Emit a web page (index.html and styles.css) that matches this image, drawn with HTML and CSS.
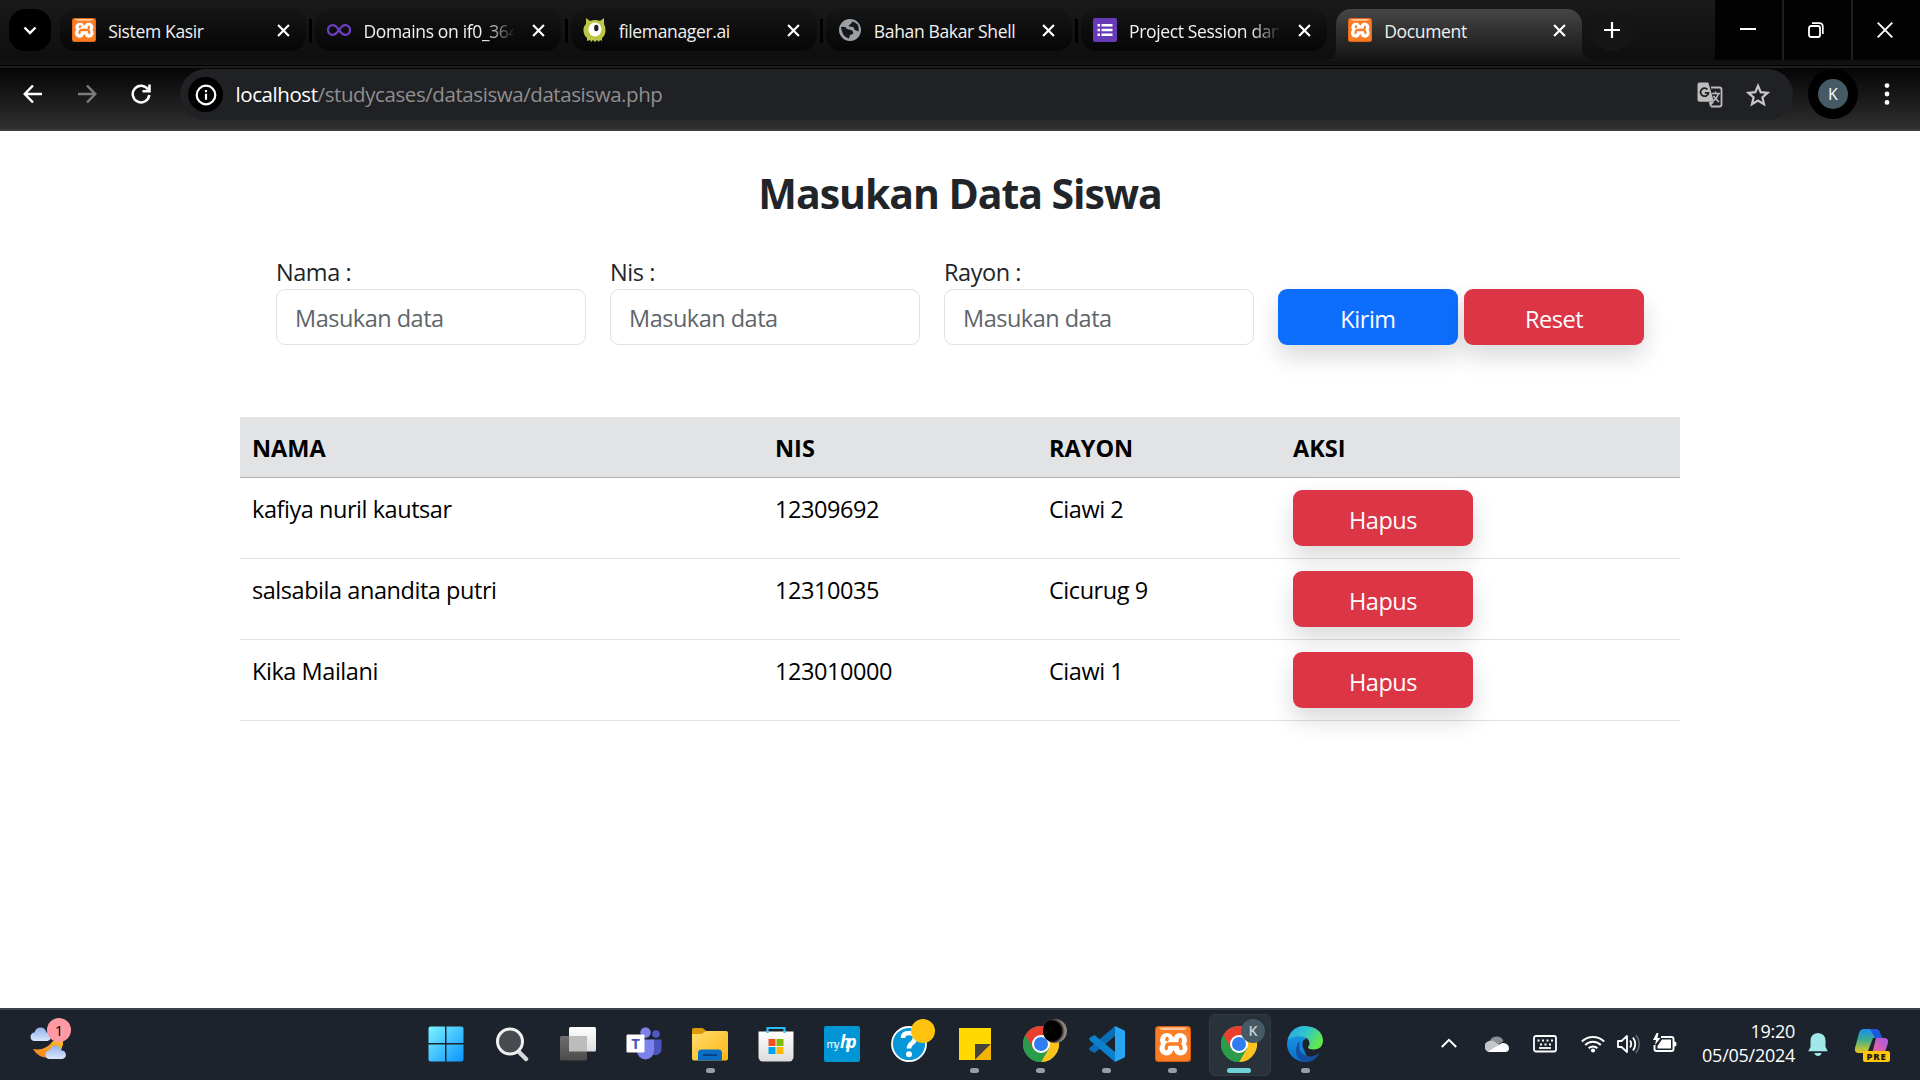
FILE: index.html
```html
<!DOCTYPE html>
<html lang="id">
<head>
<meta charset="utf-8">
<title>Document</title>
<link rel="stylesheet" href="styles.css">
</head>
<body>
<svg class="defs" width="0" height="0" aria-hidden="true">
  <defs>
    <linearGradient id="gWin" x1="0" y1="0" x2="1" y2="1"><stop offset="0" stop-color="#7df3ff"/><stop offset="1" stop-color="#0a93ff"/></linearGradient>
    <linearGradient id="gFold" x1="0" y1="0" x2="1" y2="1"><stop offset="0" stop-color="#ffdc6e"/><stop offset="1" stop-color="#fdb813"/></linearGradient>
    <linearGradient id="gCloud" x1="0" y1="0" x2="0" y2="1"><stop offset="0" stop-color="#8fb0ea"/><stop offset="1" stop-color="#dbe7fb"/></linearGradient>
    <linearGradient id="gMoon" x1="1" y1="0" x2="0" y2="1"><stop offset="0" stop-color="#fbc02d"/><stop offset="1" stop-color="#f57c1a"/></linearGradient>
    <linearGradient id="gGrey" x1="0" y1="0" x2="0" y2="1"><stop offset="0" stop-color="#6e6e6e"/><stop offset="1" stop-color="#4c4c4c"/></linearGradient>
    <linearGradient id="gWhite" x1="0" y1="0" x2="0" y2="1"><stop offset="0" stop-color="#fff"/><stop offset="1" stop-color="#dcdcdc"/></linearGradient>
    <linearGradient id="gEdge1" x1="0" y1="0" x2="1" y2=".5"><stop offset="0" stop-color="#2aa4e0"/><stop offset=".5" stop-color="#30c5cf"/><stop offset="1" stop-color="#62e84b"/></linearGradient>
    <linearGradient id="gEdge2" x1="0" y1="0" x2="0" y2="1"><stop offset="0" stop-color="#1ea0e4"/><stop offset="1" stop-color="#0b6fd0"/></linearGradient>
    <linearGradient id="gCopA" x1="0" y1="0" x2="0" y2="1"><stop offset="0" stop-color="#1b8df0"/><stop offset=".45" stop-color="#3fae8e"/><stop offset="1" stop-color="#ecc817"/></linearGradient>
    <linearGradient id="gCopB" x1="1" y1="0" x2="0" y2="1"><stop offset="0" stop-color="#a557ee"/><stop offset="1" stop-color="#ff6a7c"/></linearGradient>
    <symbol id="xampp" viewBox="0 0 36 36">
      <rect width="36" height="36" rx="3.5" fill="#d85f10"/>
      <rect x="1" y="1" width="34" height="34" rx="3" fill="#fb7d26"/>
      <path d="M4 1.5h28q-1 2.5-5 2.5H9Q5 4 4 1.5z" fill="#ffc79c"/>
      <g fill="#fff"><circle cx="12" cy="14" r="7"/><circle cx="25" cy="14" r="7"/><circle cx="11.5" cy="22.500" r="7"/><circle cx="25.500" cy="22.500" r="7"/><path d="M12 12h13v12H12z"/></g>
      <path d="M18.500 6v4M18.500 26v4" stroke="#fb7d26" stroke-width="2.500"/>
      <path d="M11.300 22.500c0-4 1-4.500 4-4.500h6c4 0 4-1.500 4-4.500M23 18c2.500.5 3 2 3 4.500M12 12.500v1.200" fill="none" stroke="#fb7d26" stroke-width="3.400" stroke-linecap="round"/>
    </symbol>
    <symbol id="chrome" viewBox="0 0 36 36">
      <circle cx="18" cy="18" r="18" fill="#2fa14f"/>
      <path d="M18 18 2.400 9A18 18 0 0 1 33.600 9z" fill="#e8402f"/>
      <path d="M18 9h15.600A18 18 0 0 1 18 36l7.800-13.500z" fill="#fcc31e"/>
      <path d="M2.400 9A18 18 0 0 0 18 36l7.800-13.500L18 18l-7.800 4.500z" fill="#2b9c4a"/>
      <path d="M2.400 9 10.200 22.500 18 18V9z" fill="#e8402f"/>
      <circle cx="18" cy="18" r="9" fill="#fff"/><circle cx="18" cy="18" r="7" fill="#2f7df0"/>
    </symbol>
    <symbol id="x" viewBox="0 0 12 12"><path d="M1 1l10 10M11 1 1 11" stroke="#fff" stroke-width="2" fill="none"/></symbol>
  </defs>
</svg>

<header class="browser">
  <div class="tabstrip">
    <div class="tab-search"><svg width="14" height="9" viewBox="0 0 14 9"><path d="M1.500 1.500 7 7l5.500-5.500" fill="none" stroke="#fff" stroke-width="2.400"/></svg></div>
    <div class="tabs">
      <div class="tab"><svg class="fav"><use href="#xampp"/></svg><span class="name">Sistem Kasir</span><svg class="close"><use href="#x"/></svg></div>
      <div class="tab"><svg class="fav" viewBox="0 0 24 24"><path d="M12 12c-2.500-3.500-4-4.800-6.200-4.800a4.800 4.800 0 0 0 0 9.600c2.200 0 3.700-1.300 6.200-4.800s4-4.800 6.200-4.800a4.800 4.800 0 0 1 0 9.600c-2.200 0-3.700-1.300-6.200-4.800z" fill="none" stroke="#6b3fc0" stroke-width="2.300"/></svg><span class="name faded">Domains on if0_364</span><svg class="close"><use href="#x"/></svg></div>
      <div class="tab"><svg class="fav" viewBox="0 0 24 24"><path d="M3 0l4 3q5-2 10 0l4-3v6q2 3 1.500 7-.5 5-3.500 7v3l-2-1-1 2-2-2-2 2-2-2-2 2-1-2-3 1v-3q-3-2-3.500-7Q0 9 3 6z" fill="#bcc544"/><ellipse cx="12" cy="11.500" rx="6.500" ry="7" fill="#fff"/><ellipse cx="13.300" cy="10" rx="2.200" ry="3.300" fill="#222"/></svg><span class="name">filemanager.ai</span><svg class="close"><use href="#x"/></svg></div>
      <div class="tab"><svg class="fav" viewBox="0 0 24 24"><circle cx="12" cy="12" r="11" fill="#9aa0a6"/><path d="M3 9q5-1 6 2l4 1q3 1 2 4l-3 1-1 3.500Q4 19 3 9zM14 3.500q0 2-2 3t-1 2l4 .5q2 1 1 2.500l4.500 2Q22 5 14 3.500z" fill="#17181a"/></svg><span class="name">Bahan Bakar Shell</span><svg class="close"><use href="#x"/></svg></div>
      <div class="tab"><svg class="fav" viewBox="0 0 24 24"><rect width="24" height="24" rx="2" fill="#673ab7"/><path d="M4.500 6h2.500v2.500H4.500zM4.500 10.800h2.500v2.500H4.500zM4.500 15.500h2.500V18H4.500zM8.500 6h11v2.500h-11zM8.500 10.800h11v2.500h-11zM8.500 15.500h11V18h-11z" fill="#fff"/></svg><span class="name faded">Project Session dan</span><svg class="close"><use href="#x"/></svg></div>
      <div class="tab active"><svg class="fav"><use href="#xampp"/></svg><span class="name">Document</span><svg class="close"><use href="#x"/></svg></div>
    </div>
    <div class="new-tab"><svg width="16" height="16" viewBox="0 0 16 16"><path d="M8 0v16M0 8h16" stroke="#fff" stroke-width="2.200"/></svg></div>
    <div class="win-controls">
      <div class="win-btn"><svg width="16" height="16" viewBox="0 0 16 16"><path d="M0 7h16" stroke="#fff" stroke-width="2"/></svg></div>
      <div class="win-btn"><svg width="16" height="16" viewBox="0 0 16 16"><rect x="1" y="4" width="11" height="11" rx="2" fill="none" stroke="#fff" stroke-width="1.800"/><path d="M4 1.200h7.500q3.300 0 3.300 3.300V12" fill="none" stroke="#fff" stroke-width="1.700"/></svg></div>
      <div class="win-btn"><svg width="16" height="16" viewBox="0 0 16 16"><path d="M.7.7l14.600 14.600M15.300.7.7 15.300" stroke="#fff" stroke-width="1.900"/></svg></div>
    </div>
  </div>

  <div class="toolbar">
    <div class="nav">
      <svg width="20" height="20" viewBox="0 0 20 20"><path d="M19 10H2M10 1.500 1.800 10 10 18.500" fill="none" stroke="#fff" stroke-width="2.500"/></svg>
      <svg width="20" height="20" viewBox="0 0 20 20"><path d="M1 10h17M10 1.500l8.200 8.500-8.200 8.500" fill="none" stroke="#7b7b7b" stroke-width="2.500"/></svg>
      <svg width="20" height="20" viewBox="0 0 20 20"><path d="M17 5.500A8.300 8.300 0 1 0 18.300 11M18.500.5v6.700h-7" fill="none" stroke="#fff" stroke-width="2.500"/></svg>
    </div>
    <div class="omnibox">
      <div class="site-info"><svg width="22" height="22" viewBox="0 0 22 22"><circle cx="11" cy="11" r="9.300" fill="none" stroke="#fff" stroke-width="2.200"/><path d="M11 9.800v6M11 6v2.200" stroke="#fff" stroke-width="2.200"/></svg></div>
      <div class="url"><b>localhost</b>/studycases/datasiswa/datasiswa.php</div>
      <svg class="translate" width="26" height="26" viewBox="0 0 26 26"><path d="M14 5.500h8.500a2 2 0 0 1 2 2v15a2 2 0 0 1-2 2H14" fill="none" stroke="#bdbdbd" stroke-width="1.800"/><path d="M2.500.5h8.800l5.700 19.300H2.500a2 2 0 0 1-2-2V2.500a2 2 0 0 1 2-2z" fill="#bdbdbd"/><path d="M12 20h5l-4 5z" fill="#bdbdbd"/><path d="M10.500 7.500a4 4 0 1 0 1 3.300H7.800" fill="none" stroke="#202124" stroke-width="1.800"/><path d="M14.500 11.500H23M18.500 9.500v2M21.500 11.500q-1 4-5 7.500M16.500 14q2 3 5.500 6" fill="none" stroke="#bdbdbd" stroke-width="1.500"/></svg>
      <svg width="26" height="26" viewBox="0 0 26 26"><path d="M13 3.800l2.700 6.400 6.900.6-5.200 4.500 1.600 6.800-6-3.600-6 3.600 1.600-6.800-5.200-4.500 6.900-.6z" fill="none" stroke="#c7c7c7" stroke-width="2.200"/></svg>
    </div>
    <div class="profile"><span>K</span></div>
    <svg class="menu" width="6" height="22" viewBox="0 0 6 22"><g fill="#fff"><circle cx="3" cy="2.600" r="2.400"/><circle cx="3" cy="11" r="2.400"/><circle cx="3" cy="19.400" r="2.400"/></g></svg>
  </div>
</header>

<main class="page">
  <h1>Masukan Data Siswa</h1>
  <form class="entry" onsubmit="return false">
    <label class="field">Nama :<input type="text" placeholder="Masukan data"></label>
    <label class="field">Nis :<input type="text" placeholder="Masukan data"></label>
    <label class="field">Rayon :<input type="text" placeholder="Masukan data"></label>
    <div class="actions">
      <button class="btn primary">Kirim</button>
      <button class="btn danger">Reset</button>
    </div>
  </form>
  <table class="students">
    <colgroup><col class="c-nama"><col class="c-nis"><col class="c-rayon"><col></colgroup>
    <thead><tr><th>NAMA</th><th>NIS</th><th>RAYON</th><th>AKSI</th></tr></thead>
    <tbody>
      <tr><td>kafiya nuril kautsar</td><td>12309692</td><td>Ciawi 2</td><td class="act"><button class="btn danger">Hapus</button></td></tr>
      <tr><td>salsabila anandita putri</td><td>12310035</td><td>Cicurug 9</td><td class="act"><button class="btn danger">Hapus</button></td></tr>
      <tr><td>Kika Mailani</td><td>123010000</td><td>Ciawi 1</td><td class="act"><button class="btn danger">Hapus</button></td></tr>
    </tbody>
  </table>
</main>

<footer class="taskbar">
  <div class="weather">
    <svg width="42" height="46" viewBox="0 0 42 46"><path d="M33 20.500v5a16 16 0 0 1-30 4.500q12 2.500 20-8z" fill="url(#gMoon)"/><path d="M4 22a4.300 4.300 0 0 1 .5-8.500Q6 8.500 10.500 8.500t6 5a4.300 4.300 0 0 1 1 8.500z" fill="url(#gCloud)"/><path d="M19 40a4.300 4.300 0 0 1 .5-8.500q1.500-5 6-5t6 5a4.300 4.300 0 0 1 1 8.500z" fill="url(#gCloud)"/></svg>
    <span class="count">1</span>
  </div>
  <div class="apps">
    <div class="app"><svg viewBox="0 0 36 36"><path d="M2.500.5H17V17H.5V2.500a2 2 0 0 1 2-2zM18.500.5h15a2 2 0 0 1 2 2V17h-17zM.5 18.500H17v17H2.500a2 2 0 0 1-2-2zM18.500 18.500h17v15a2 2 0 0 1-2 2h-15z" fill="url(#gWin)"/></svg></div>
    <div class="app"><svg viewBox="0 0 36 36"><path d="M25 26l7 7" stroke="#d5d7d9" stroke-width="4.500" stroke-linecap="round"/><circle cx="16" cy="15.500" r="12.500" fill="#474b50" stroke="#f0f0f0" stroke-width="3"/></svg></div>
    <div class="app"><svg viewBox="0 0 36 36"><rect x="9" y="1" width="27" height="24.500" rx="1.500" fill="url(#gWhite)"/><rect x="0" y="10" width="27" height="24.500" rx="1.500" fill="url(#gGrey)"/><path d="M9 10h18v15.500H9z" fill="#bcbcbc"/></svg></div>
    <div class="app"><svg viewBox="0 0 36 36"><circle cx="30" cy="8" r="3.800" fill="#5059c9"/><path d="M26 13.500h9.500V24a6 6 0 0 1-9.500 4z" fill="#4b53bc"/><circle cx="19.500" cy="6.500" r="5.200" fill="#7b83eb"/><path d="M11 13.500h17V25a8.500 8.500 0 0 1-17 0z" fill="#7b83eb"/><rect x=".5" y="8.500" width="18" height="18" rx="1.300" fill="#fff"/><text x="9.500" y="23" class="t-teams">T</text></svg></div>
    <div class="app running"><svg viewBox="0 0 36 36"><path d="M0 4a2 2 0 0 1 2-2h8.500l4 3-3.500 4H0z" fill="#dc9a09"/><path d="M0 8h9.500l5-3H34a2 2 0 0 1 2 2v25.500a2 2 0 0 1-2 2H2a2 2 0 0 1-2-2z" fill="url(#gFold)"/><path d="M6 34.500V27a3.500 3.500 0 0 1 3.500-3.500h17A3.500 3.500 0 0 1 30 27v7.500z" fill="#0a6fc4"/><path d="M11 29h14" stroke="#073f7d" stroke-width="1.800"/></svg></div>
    <div class="app"><svg viewBox="0 0 36 36"><path d="M9.500 8V2h17v6" fill="none" stroke="#28bdf2" stroke-width="2.200"/><path d="M.5 5.500h35V31a4.500 4.500 0 0 1-4.500 4.500H5A4.500 4.500 0 0 1 .5 31z" fill="url(#gWhite)"/><path d="M9.500 7V5.500M26.500 7V5.500" stroke="#28bdf2" stroke-width="2.200"/><path d="M10.500 13h7v7h-7z" fill="#f25022"/><path d="M18.500 13h7v7h-7z" fill="#7fba00"/><path d="M10.500 21h7v7h-7z" fill="#00a4ef"/><path d="M18.500 21h7v7h-7z" fill="#ffb900"/></svg></div>
    <div class="app"><svg viewBox="0 0 36 36"><rect width="36" height="36" rx="2" fill="#0096d6"/><text x="2.500" y="21.500" class="t-my" textLength="13">my</text><text x="16" y="22" class="t-hp" textLength="16.500">hp</text></svg></div>
    <div class="app"><svg viewBox="0 0 36 36"><circle cx="18" cy="18" r="17" fill="#0796d8" stroke="#fff" stroke-width="1.800"/><path d="M12 12q0-5 6-5t6 5q0 3-3.500 5.500-2.500 2-2.500 5" fill="none" stroke="#fff" stroke-width="4.600"/><circle cx="18" cy="28.200" r="3" fill="#fff"/></svg><i class="badge yellow"></i></div>
    <div class="app running"><svg viewBox="0 0 36 36"><path d="M2 2h32v32H2z" fill="#ffd900"/><path d="M18 18h16L18 34z" fill="#45423f"/><path d="M34 18v16H18z" fill="#f5b400"/></svg></div>
    <div class="app running"><svg><use href="#chrome"/></svg><i class="badge moon"></i></div>
    <div class="app running"><svg viewBox="0 0 36 36"><path d="M26 0v10L5.500 27 1 24.500q-1.500-1.500 0-3z" fill="#0a6cb5"/><path d="M26 36V26L5.500 9 1 11.500q-1.500 1.500 0 3z" fill="#0b80cc"/><path d="M26 0l9 4.300q1 .5 1 1.700v24q0 1.200-1 1.700L26 36z" fill="#27a5f3"/></svg></div>
    <div class="app running"><svg><use href="#xampp"/></svg></div>
    <div class="app running current"><svg><use href="#chrome"/></svg><i class="badge kay">K</i></div>
    <div class="app running"><svg viewBox="0 0 36 36"><path d="M18 0a18 18 0 0 0-18 18 18 18 0 0 0 22 17.500l-6-14Q14 14 19 13z" fill="url(#gEdge2)"/><path d="M13 15q-3.500 12 7 15 6 1.500 12.500-3Q28 36 19 36 7 34 9.500 21q1-4 3.500-6z" fill="#12509f"/><path d="M1 14Q4 0 18 0q17 1 18 14.500 0 8.500-9 9-6 0-6-2.500 2-2 1.500-4.500-1-5-7.500-6Q6 9.500 1 14z" fill="url(#gEdge1)"/></svg></div>
  </div>
  <div class="tray">
    <svg class="up" width="16" height="10" viewBox="0 0 16 10"><path d="M.8 9 8 1.800 15.200 9" fill="none" stroke="#fff" stroke-width="2"/></svg>
    <svg class="cloud" width="24" height="18" viewBox="0 0 24 18"><path d="M5.500 15A5 5 0 0 1 5 5.500 7.500 7.500 0 0 1 18.500 6z" fill="#8b8f94"/><path d="M5 17A5.500 5.500 0 0 1 5 6q4-1 6.500 2L20 14z" fill="#c3c5c8"/><path d="M3 16.500 17 8q6.500 0 7 5 0 4-4 4H5z" fill="#fff"/></svg>
    <svg class="kbd" width="24" height="18" viewBox="0 0 24 18"><rect x="1" y="1" width="22" height="15.500" rx="2" fill="none" stroke="#fff" stroke-width="1.800"/><path d="M4.500 5.500h16" stroke="#fff" stroke-width="2" stroke-dasharray="2 2.500"/><path d="M7 9.500h12" stroke="#fff" stroke-width="2" stroke-dasharray="2 2.500"/><path d="M6 13h12" stroke="#fff" stroke-width="1.800"/></svg>
    <svg class="wifi" width="24" height="18" viewBox="0 0 24 18"><g fill="none" stroke="#fff" stroke-width="1.900"><path d="M.8 6.500a16 16 0 0 1 22.400 0M4.200 10a11 11 0 0 1 15.600 0M7.600 13.300a6.300 6.300 0 0 1 8.800 0"/></g><circle cx="12" cy="15.500" r="2.100" fill="#fff"/></svg>
    <svg class="vol" width="24" height="20" viewBox="0 0 24 20"><g fill="none" stroke="#fff" stroke-width="1.800"><path d="M1 7h3.500L10 2v16l-5.500-5H1z" stroke-linejoin="round"/><path d="M13 6.500q2.500 3.500 0 7M16 3.500q4.500 6.500 0 13"/><path d="M19 1q6.500 9 0 18" stroke="#5d6267"/></g></svg>
    <svg class="bat" width="26" height="22" viewBox="0 0 26 22"><path d="M9 5h10.500a2 2 0 0 1 2 2v10a2 2 0 0 1-2 2h-15a2 2 0 0 1-2-2v-4" fill="none" stroke="#fff" stroke-width="1.900"/><path d="M10 7.500h9v9H5.500V14z" fill="#fff"/><path d="M22 9.500h1q1.500 0 1.500 2.500T23 14.500h-1z" fill="#fff"/><path d="M4.500 1 1 8h3l-1 5 5.500-7H5.500L6.500 1z" fill="#fff"/></svg>
    <div class="clock"><span>19:20</span><span>05/05/2024</span></div>
    <svg class="bell" width="20" height="24" viewBox="0 0 20 24"><path d="M10 0q7.500.5 7.500 8v6l2.300 4.200H.2L2.500 14V8Q2.500.5 10 0zM6.300 20h7.400q-1 3-3.700 3t-3.700-3z" fill="#9fe9ea"/></svg>
    <div class="copilot">
      <svg width="36" height="36" viewBox="0 0 36 36"><path d="M10 1h11q4 0 5 4l2 5h-9L14 23q-1 2-3 2H5q-5 0-4-5L5 5q1-4 5-4z" fill="url(#gCopA)"/><path d="M16 1h5q4 0 5 4l2 5h-7z" fill="#1c57dd"/><path d="M22 10h8q5 0 4 5l-3 9q-1 3-4 3H15q3-1 4-5z" fill="url(#gCopB)"/></svg>
      <span class="pre">PRE</span>
    </div>
  </div>
</footer>
</body>
</html>
```
FILE: styles.css
```css
* { box-sizing: border-box; }
body {
  margin: 0;
  width: 1920px;
  height: 1080px;
  overflow: hidden;
  display: flex;
  flex-direction: column;
  background: #fff;
  font-family: "Open Sans", "Noto Sans", sans-serif;
}
svg { display: block; flex: none; }
.defs { position: absolute; }

/* browser chrome */
.browser { height: 131px; flex: none; background: #0c0c0c; }
.tabstrip {
  height: 68px;
  display: flex;
  align-items: flex-start;
  padding-left: 9px;
  background: linear-gradient(#1a1a1a, #0e0e0e 60px, #141414 65px, #000 65px, #000 66px, #1e1e1e 66px);
}
.tab-search {
  width: 42px; height: 42px; margin-top: 9px;
  border-radius: 16px; background: #000;
  display: grid; place-items: center;
}
.tabs { display: flex; margin-left: 9.3px; gap: 9.2px; }
.tab {
  width: 246px; height: 42px; margin-top: 9px;
  padding: 0 16.5px 0 12px;
  border-radius: 15px;
  display: flex; align-items: center;
  background: linear-gradient(#151515, #060606);
  position: relative;
}
.tab + .tab:not(.active)::before {
  content: ""; position: absolute; left: -6px; top: 10px;
  width: 3px; height: 24px; background: #000;
}
.tab.active {
  height: 52px; padding-bottom: 10px;
  border-radius: 15px 15px 0 0;
  background: linear-gradient(#464646, #141414);
}
.tab.active::before, .tab.active::after {
  content: ""; position: absolute; bottom: 0; width: 12px; height: 12px;
}
.tab.active::before { left: -12px; background: radial-gradient(circle at 0 0, transparent 11.5px, #161616 12px); }
.tab.active::after { right: -12px; background: radial-gradient(circle at 100% 0, transparent 11.5px, #161616 12px); }
.fav { width: 24px; height: 24px; }
.name {
  width: 150px; margin-left: 12px; margin-top: 2px;
  color: #f1f1f1; font-size: 17.5px; letter-spacing: -.35px;
  white-space: nowrap; overflow: hidden;
}
.name.faded {
  -webkit-mask-image: linear-gradient(90deg, #000 122px, transparent 153px);
  mask-image: linear-gradient(90deg, #000 122px, transparent 153px);
}
.close { width: 13px; height: 13px; margin-left: auto; }
.new-tab {
  width: 42px; height: 42px; margin: 9px 0 0 9px;
  border-radius: 50%; background: #161616;
  display: grid; place-items: center;
}
.win-controls { margin-left: auto; display: flex; gap: 2px; background: #1d1d1d; }
.win-btn { width: 67px; height: 60px; padding-right: 1px; background: #020202; display: grid; place-items: center; }
.win-btn + .win-btn { padding-right: 3px; }

.toolbar {
  height: 63px;
  display: flex; align-items: flex-start;
  padding-top: 1px;
  background: linear-gradient(#050505, #2f2f2f 61px, #3b3b3b 61px);
}
.nav { display: flex; width: 180px; padding: 15px 0 0 23px; gap: 34px; }
.omnibox {
  width: 1613px; height: 51px; border-radius: 26px;
  background: #202124;
  display: flex; align-items: center;
  padding: 0 22px 0 8px;
}
.site-info { width: 35px; height: 35px; border-radius: 50%; background: #000; display: grid; place-items: center; }
.url { flex: 1; margin: -1px 0 0 12.5px; font-size: 20.5px; letter-spacing: -.42px; color: #8f8f8f; }
.url b { font-weight: 400; color: #fff; }
.translate { margin-right: 22px; }
.profile { width: 50px; height: 50px; margin-left: 15px; border-radius: 50%; background: #000; display: grid; place-items: center; }
.profile span { width: 30px; height: 30px; border-radius: 50%; background: #455a64; color: #fff; font-size: 16px; line-height: 31px; text-align: center; }
.menu { margin: 14px 0 0 26px; }

/* page */
.page { flex: 1; width: 1440px; margin: 0 auto; padding-top: 37px; font-size: 23.5px; letter-spacing: -.45px; line-height: 36px; }
h1 { margin: 0 0 30px; text-align: center; font-size: 41px; line-height: 50px; letter-spacing: -1.05px; font-weight: 700; color: #212529; }
.entry { display: flex; align-items: flex-end; gap: 24px; padding-left: 36px; height: 97px; color: #212529; }
.field { display: flex; flex-direction: column; width: 310px; }
.field input {
  height: 56px; margin-top: -1px; width: 100%;
  padding: 2px 18px 0; border: 1px solid #dee2e6; border-radius: 9px;
  background: #fff; font: inherit; letter-spacing: -.5px;
}
.field input::placeholder { color: #5f6569; opacity: 1; }
.actions { display: flex; gap: 6px; }
.btn {
  display: block; width: 180px; height: 56px; padding: 3px 0 0;
  border: 0; border-radius: 9px;
  font: inherit; letter-spacing: inherit; color: #fff;
  box-shadow: 0 12px 24px rgba(0, 0, 0, .15);
}
.primary { background: #0d6efd; }
.danger { background: #dc3545; }
.students { width: 1440px; margin-top: 72px; border-collapse: separate; border-spacing: 0; table-layout: fixed; color: #000; }
.c-nama { width: 523px; }
.c-nis { width: 274px; }
.c-rayon { width: 244px; }
th { height: 61px; padding: 13px 12px 11px; text-align: left; font-weight: 700; letter-spacing: 0; background: #e2e3e5; border-bottom: 1px solid #b0b2b4; }
td { height: 81px; padding: 13px 12px 11px; vertical-align: top; border-bottom: 1px solid #dee2e6; }
td.act { padding: 12px; }

/* taskbar */
.taskbar {
  height: 72px; flex: none;
  display: flex;
  background: #1c232c;
  border-top: 2px solid #3d4147;
}
.weather { width: 412px; padding: 9px 0 0 30px; position: relative; }
.count {
  position: absolute; left: 47px; top: 8px;
  width: 24px; height: 24px; border-radius: 50%;
  background: #ff99a4; color: #000; font-size: 15px; line-height: 24px; text-align: center;
}
.apps { display: flex; padding-left: 1px; }
.app { width: 66.08px; height: 70px; padding: 16px 15px 0; position: relative; }
.app svg { width: 36px; height: 36px; position: relative; }
.running::after {
  content: ""; position: absolute; left: 28.500px; bottom: 7px;
  width: 9px; height: 5px; border-radius: 3px; background: #9a9da1;
}
.current::before {
  content: ""; position: absolute; left: 3px; top: 4px;
  width: 60px; height: 60px; border-radius: 6px;
  background: #29313a; border: 1px solid #343b44;
}
.current::after { left: 21px; width: 24px; background: #6fd0d8; }
.badge { position: absolute; left: 35px; top: 9px; width: 24px; height: 24px; border-radius: 50%; }
.yellow { background: #ffc20e; }
.moon { background: radial-gradient(circle at 35% 50%, #000 50%, #8d8580 68%); }
.kay { background: #455a64; color: #c9d0d4; font-size: 14px; font-style: normal; font-weight: 600; line-height: 24px; text-align: center; }
.t-teams { font: 700 15px "Open Sans", sans-serif; fill: #4b53bc; text-anchor: middle; }
.t-my { font: 400 10.500px "Open Sans", sans-serif; fill: #fff; }
.t-hp { font: italic 700 17px "Open Sans", sans-serif; fill: #fff; }
.tray { display: flex; align-items: flex-start; margin-left: 103px; }
.up { margin-top: 28px; }
.cloud { margin: 25px 0 0 28px; }
.kbd { margin: 25px 0 0 24px; }
.wifi { margin: 25px 0 0 24px; }
.vol { margin: 24px 0 0 12px; }
.bat { margin: 22px 0 0 11px; }
.clock { width: 117px; padding-top: 9px; display: flex; flex-direction: column; align-items: flex-end; color: #fff; font-size: 18px; line-height: 24px; letter-spacing: -.25px; }
.bell { margin: 23px 0 0 13px; }
.copilot { position: relative; margin: 18px 0 0 26px; }
.pre {
  position: absolute; left: 9px; top: 23px; width: 27px; height: 11px;
  border-radius: 2px; background: #ffc60a; color: #1b1b1b;
  font-size: 9.500px; font-weight: 800; line-height: 11px; text-align: center; letter-spacing: .8px;
}
```
